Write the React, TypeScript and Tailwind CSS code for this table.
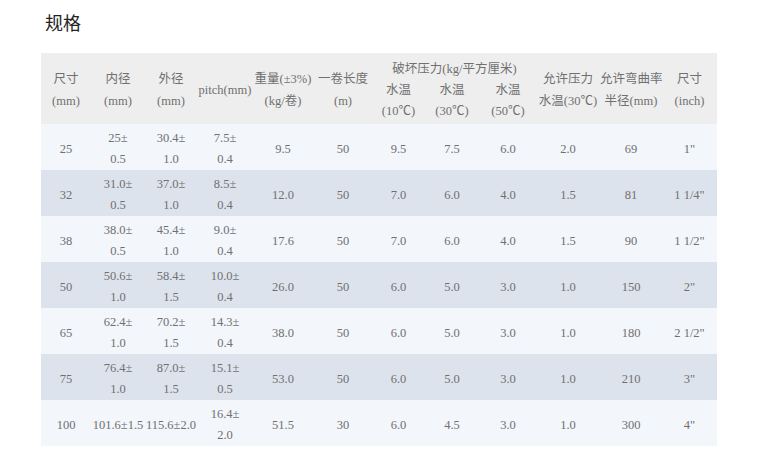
const widths = [50, 54, 52, 56, 60, 60, 51, 56, 56, 64, 62, 55]

type Row = string[]

const rows: Row[] = [
  ['25', '25±\n0.5', '30.4±\n1.0', '7.5±\n0.4', '9.5', '50', '9.5', '7.5', '6.0', '2.0', '69', '1"'],
  ['32', '31.0±\n0.5', '37.0±\n1.0', '8.5±\n0.4', '12.0', '50', '7.0', '6.0', '4.0', '1.5', '81', '1 1/4"'],
  ['38', '38.0±\n0.5', '45.4±\n1.0', '9.0±\n0.4', '17.6', '50', '7.0', '6.0', '4.0', '1.5', '90', '1 1/2"'],
  ['50', '50.6±\n1.0', '58.4±\n1.5', '10.0±\n0.4', '26.0', '50', '6.0', '5.0', '3.0', '1.0', '150', '2"'],
  ['65', '62.4±\n1.0', '70.2±\n1.5', '14.3±\n0.4', '38.0', '50', '6.0', '5.0', '3.0', '1.0', '180', '2 1/2"'],
  ['75', '76.4±\n1.0', '87.0±\n1.5', '15.1±\n0.5', '53.0', '50', '6.0', '5.0', '3.0', '1.0', '210', '3"'],
  ['100', '101.6±1.5', '115.6±2.0', '16.4±\n2.0', '51.5', '30', '6.0', '4.5', '3.0', '1.0', '300', '4"'],
]

function Lines({ text }: { text: string }) {
  const parts = text.split('\n')
  return (
    <>
      {parts.map((p, i) => (
        <span key={i} className="block">
          {p}
        </span>
      ))}
    </>
  )
}

export default function App() {
  return (
    <div
      className="min-h-[467px] bg-white pl-[41px] pt-[9px] text-[#707070]"
      style={{ fontFamily: '"Liberation Serif", "Noto Sans CJK SC", serif' }}
    >
      <h2
        className="pl-[4px] text-[18px] leading-[26px] text-[#222]"
        style={{ fontFamily: '"Noto Sans CJK SC", sans-serif' }}
      >
        规格
      </h2>
      <table className="mt-[18px] w-[676px] table-fixed border-collapse text-center text-[12.5px]">
        <colgroup>
          {widths.map((w, i) => (
            <col key={i} style={{ width: w }} />
          ))}
        </colgroup>
        <thead className="bg-[#eeeeee] leading-[22px]">
          <tr className="h-[27px]">
            <th rowSpan={2} className="pt-[2px] font-normal">
              <Lines text={'尺寸\n(mm)'} />
            </th>
            <th rowSpan={2} className="pt-[2px] font-normal">
              <Lines text={'内径\n(mm)'} />
            </th>
            <th rowSpan={2} className="pt-[2px] font-normal">
              <Lines text={'外径\n(mm)'} />
            </th>
            <th rowSpan={2} className="pt-[2px] font-normal whitespace-nowrap">
              pitch(mm)
            </th>
            <th rowSpan={2} className="pt-[2px] font-normal whitespace-nowrap">
              <Lines text={'重量(±3%)\n(kg/卷)'} />
            </th>
            <th rowSpan={2} className="pt-[2px] font-normal whitespace-nowrap">
              <Lines text={'一卷长度\n(m)'} />
            </th>
            <th colSpan={3} className="pt-[4px] font-normal whitespace-nowrap">
              破坏压力(kg/平方厘米)
            </th>
            <th rowSpan={2} className="pt-[2px] font-normal whitespace-nowrap">
              <Lines text={'允许压力\n水温(30℃)'} />
            </th>
            <th rowSpan={2} className="pt-[2px] font-normal whitespace-nowrap">
              <Lines text={'允许弯曲率\n半径(mm)'} />
            </th>
            <th rowSpan={2} className="pt-[2px] font-normal whitespace-nowrap">
              <Lines text={'尺寸\n(inch)'} />
            </th>
          </tr>
          <tr className="h-[44px] leading-[21px]">
            <th className="pb-[2px] font-normal">
              <Lines text={'水温\n(10℃)'} />
            </th>
            <th className="pb-[2px] font-normal">
              <Lines text={'水温\n(30℃)'} />
            </th>
            <th className="pb-[2px] font-normal">
              <Lines text={'水温\n(50℃)'} />
            </th>
          </tr>
        </thead>
        <tbody className="leading-[21px]">
          {rows.map((r, i) => (
            <tr key={i} className={i % 2 === 0 ? 'h-[46px] bg-[#f3f6fb]' : 'h-[46px] bg-[#dde3ed]'}>
              {r.map((c, j) => (
                <td key={j} className="pt-[4px] whitespace-nowrap">
                  <Lines text={c} />
                </td>
              ))}
            </tr>
          ))}
        </tbody>
      </table>
    </div>
  )
}
